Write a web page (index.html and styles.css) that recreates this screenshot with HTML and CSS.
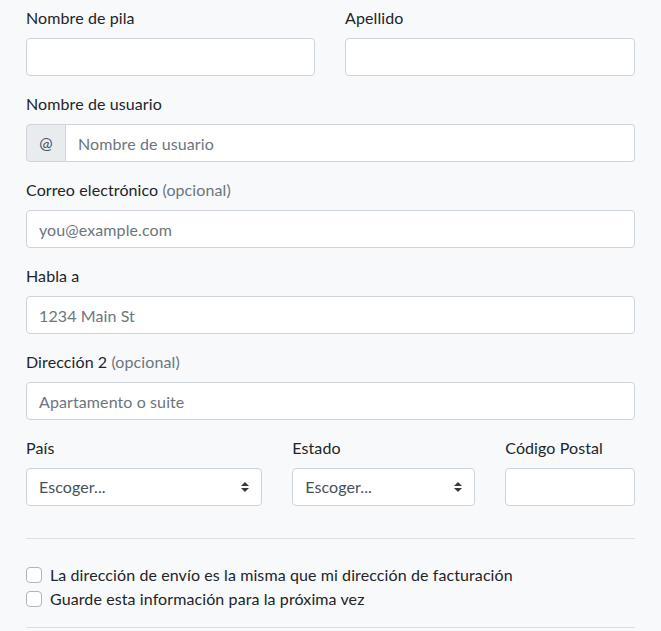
FILE: index.html
```html
<!DOCTYPE html>
<html lang="es">
<head>
<meta charset="utf-8">
<title>Checkout</title>
<link rel="stylesheet" href="styles.css">
</head>
<body>
<form class="form">
  <div class="row">
    <div class="field col-6">
      <label class="label">Nombre de pila</label>
      <input class="input" type="text">
    </div>
    <div class="field col-6">
      <label class="label">Apellido</label>
      <input class="input" type="text">
    </div>
  </div>

  <div class="field">
    <label class="label">Nombre de usuario</label>
    <div class="input-group">
      <span class="prepend">@</span>
      <input class="input input-grouped" type="text" placeholder="Nombre de usuario">
    </div>
  </div>

  <div class="field">
    <label class="label">Correo electrónico <span class="muted">(opcional)</span></label>
    <input class="input" type="email" placeholder="you@example.com">
  </div>

  <div class="field">
    <label class="label">Habla a</label>
    <input class="input" type="text" placeholder="1234 Main St">
  </div>

  <div class="field">
    <label class="label">Dirección 2 <span class="muted">(opcional)</span></label>
    <input class="input" type="text" placeholder="Apartamento o suite">
  </div>

  <div class="row">
    <div class="field col-5">
      <label class="label">País</label>
      <div class="select">Escoger...<svg class="arrows" width="8" height="10" viewBox="0 0 4 5"><path fill="#343a40" d="M2 0L0 2h4zm0 5L0 3h4z"/></svg></div>
    </div>
    <div class="field col-4">
      <label class="label">Estado</label>
      <div class="select">Escoger...<svg class="arrows" width="8" height="10" viewBox="0 0 4 5"><path fill="#343a40" d="M2 0L0 2h4zm0 5L0 3h4z"/></svg></div>
    </div>
    <div class="field col-3">
      <label class="label">Código Postal</label>
      <input class="input" type="text">
    </div>
  </div>

  <hr class="rule rule-mb">

  <label class="check"><span class="box"></span>La dirección de envío es la misma que mi dirección de facturación</label>
  <label class="check"><span class="box"></span>Guarde esta información para la próxima vez</label>

  <hr class="rule rule-mb">
</form>
</body>
</html>
```

FILE: styles.css
```css
* { box-sizing: border-box; }

html, body {
  margin: 0;
  background: #f8f9fa;
}

body {
  padding: 6px 26px 0 26px;
  font-family: "Lato", "Open Sans", sans-serif;
  font-size: 16px;
  line-height: 24px;
  letter-spacing: 0.1px;
  color: #212529;
}

.form {
  display: block;
  width: 609px;
}

.row {
  display: flex;
  gap: 30px;
}

.col-6 { flex: 0 0 289px; }
.col-6 + .col-6 { flex: 0 0 290px; }
.col-5 { flex: 0 0 236.25px; }
.col-4 { flex: 0 0 183px; }
.col-3 { flex: 0 0 129.75px; }

.field {
  margin-bottom: 16px;
}

.label {
  display: block;
  margin-bottom: 8px;
  height: 24px;
}

.muted {
  color: #6c757d;
}

.input {
  display: block;
  width: 100%;
  height: 38px;
  padding: 6px 12px;
  font-family: inherit;
  font-size: 16px;
  line-height: 24px;
  letter-spacing: 0.1px;
  color: #495057;
  background: #fff;
  border: 1px solid #ced4da;
  border-radius: 4px;
  outline: none;
  margin: 0;
}

.input::placeholder {
  color: #6c757d;
  opacity: 1;
}

.input-group {
  display: flex;
}

.prepend {
  display: flex;
  align-items: center;
  justify-content: center;
  width: 40px;
  height: 38px;
  flex: 0 0 40px;
  background: #e9ecef;
  border: 1px solid #ced4da;
  border-radius: 4px 0 0 4px;
  color: #495057;
}

.input-grouped {
  flex: 1;
  border-left: none;
  border-radius: 0 4px 4px 0;
}

.select {
  display: flex;
  align-items: center;
  justify-content: space-between;
  height: 38px;
  padding: 6px 12px;
  background: #fff;
  border: 1px solid #ced4da;
  border-radius: 4px;
  color: #495057;
}

.arrows {
  display: block;
}

.rule {
  margin: 16px 0 0 0;
  border: 0;
  border-top: 1px solid rgba(0, 0, 0, 0.1);
  height: 0;
}

.rule-mb {
  margin-bottom: 24px;
}

.check {
  display: flex;
  align-items: flex-start;
  min-height: 24px;
  gap: 8px;
}

.box {
  flex: 0 0 16px;
  width: 16px;
  height: 16px;
  margin-top: 4px;
  background: #fff;
  border: 1px solid #adb5bd;
  border-radius: 4px;
}
```
